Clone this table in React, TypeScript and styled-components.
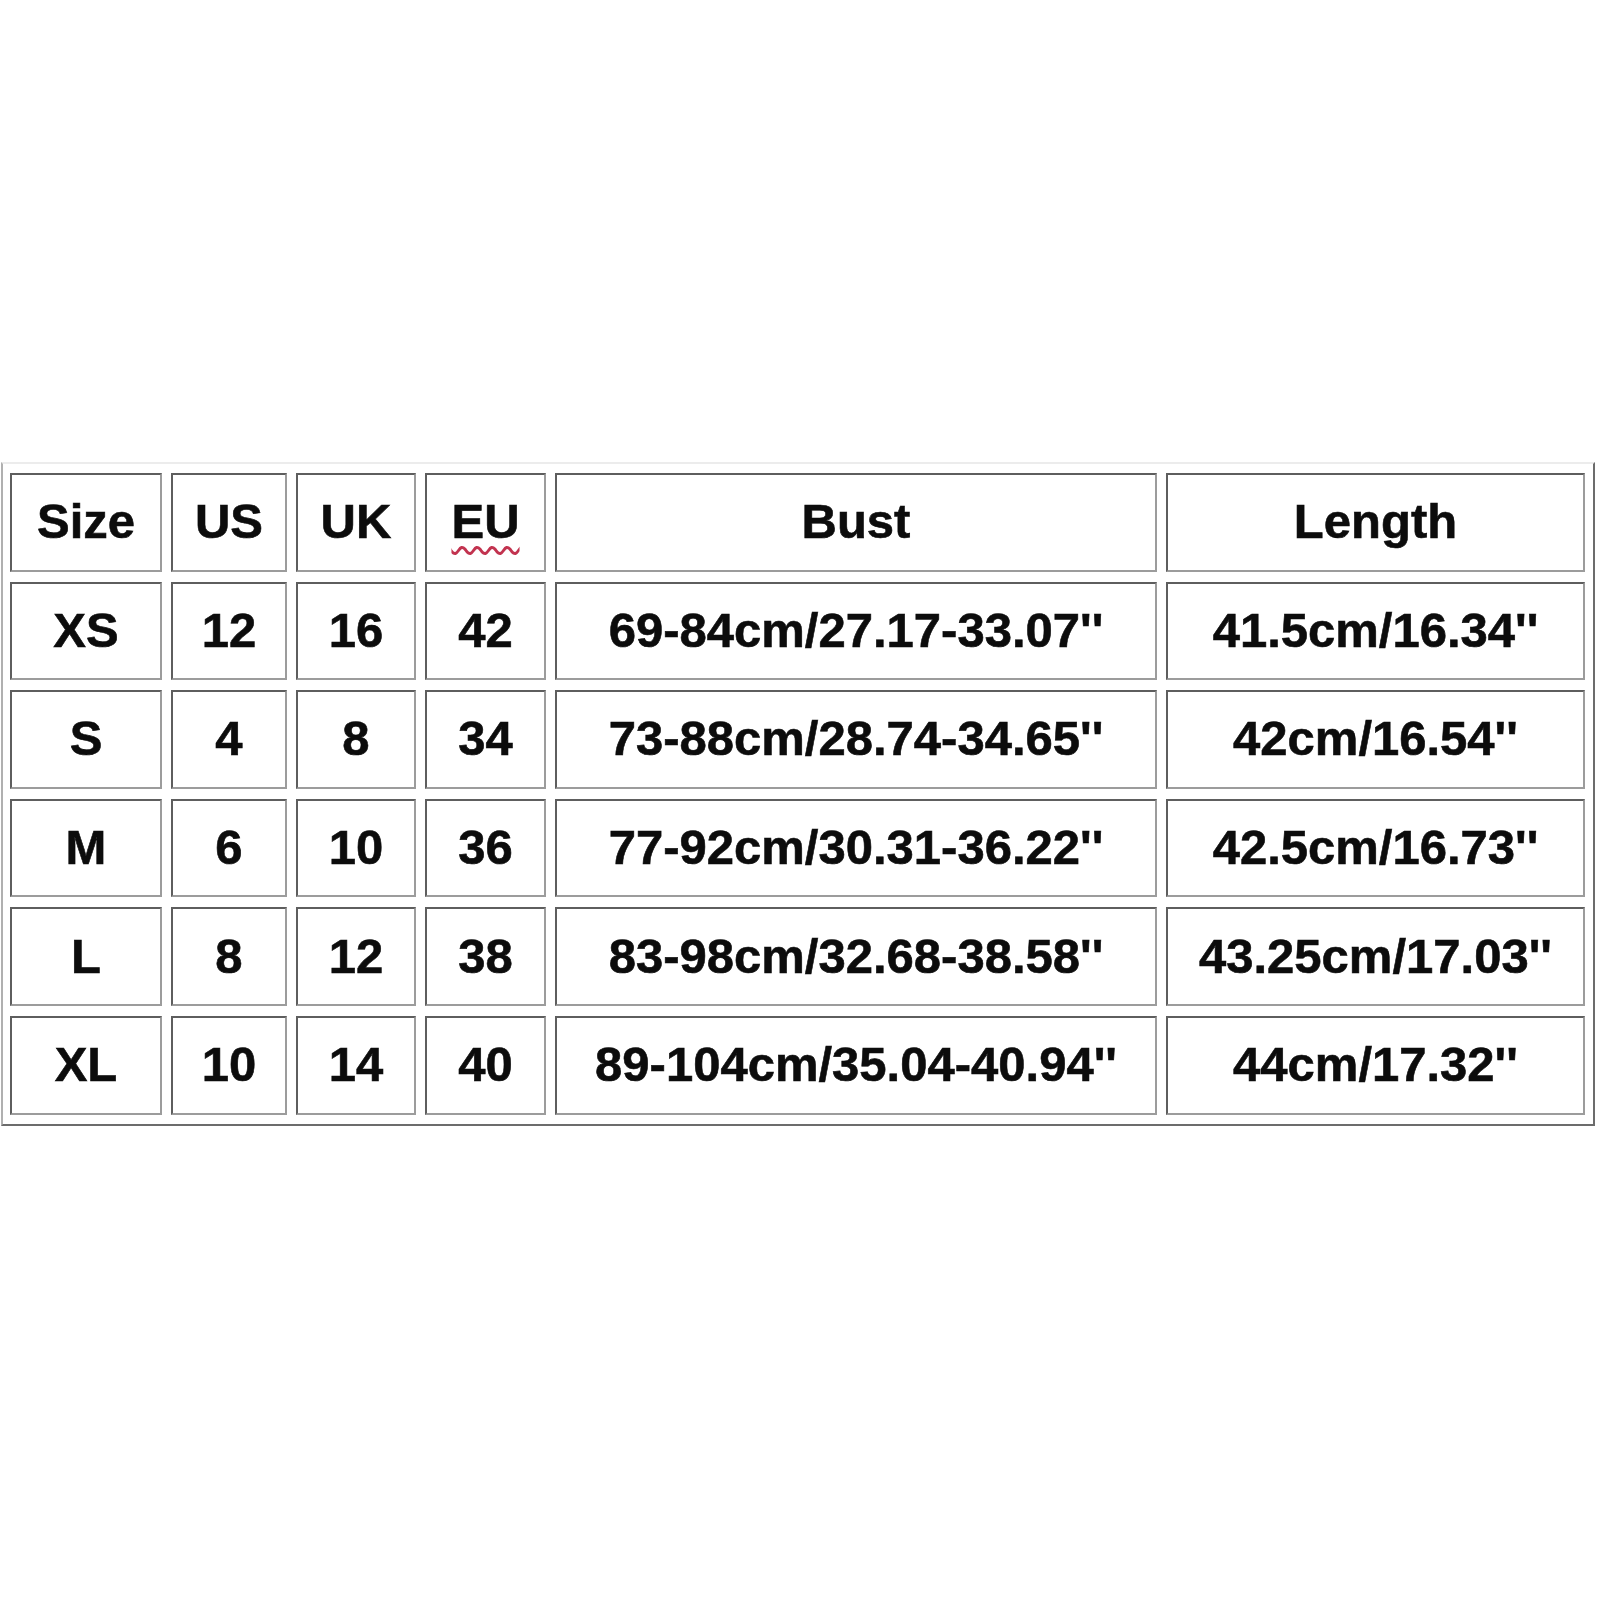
import React from "react";
import styled, { createGlobalStyle } from "styled-components";

const GlobalStyle = createGlobalStyle`
  html, body {
    margin: 0;
    padding: 0;
    background: #ffffff;
  }
`;

const columns = [152, 116, 120, 121, 602, 419];

const header = ["Size", "US", "UK", "EU", "Bust", "Length"];

const rows: string[][] = [
  ["XS", "12", "16", "42", "69-84cm/27.17-33.07''", "41.5cm/16.34''"],
  ["S", "4", "8", "34", "73-88cm/28.74-34.65''", "42cm/16.54''"],
  ["M", "6", "10", "36", "77-92cm/30.31-36.22''", "42.5cm/16.73''"],
  ["L", "8", "12", "38", "83-98cm/32.68-38.58''", "43.25cm/17.03''"],
  ["XL", "10", "14", "40", "89-104cm/35.04-40.94''", "44cm/17.32''"],
];

const App: React.FunctionComponent = () => {
  return (
    <Page>
      <GlobalStyle />
      <Frame>
        <Chart>
          {header.map((label) => (
            <Cell key={`h-${label}`}>
              <Label $misspelled={label === "EU"}>{label}</Label>
            </Cell>
          ))}
          {rows.map((row) =>
            row.map((value, i) => (
              <Cell key={`${row[0]}-${i}`}>
                <Label>{value}</Label>
              </Cell>
            ))
          )}
        </Chart>
      </Frame>
    </Page>
  );
};

export default App;

const Page = styled.div`
  width: 1600px;
  height: 1600px;
  box-sizing: border-box;
  padding: 462px 0 0 1px;
  background: #ffffff;
`;

const Frame = styled.div`
  width: 1594px;
  box-sizing: border-box;
  padding: 9px 8px 9px 7px;
  border: 2px solid #6c6c6c;
  border-top-color: #ececec;
  border-left-color: #b0b0b0;
`;

const Chart = styled.div`
  display: grid;
  grid-template-columns: ${columns.map((w) => `${w}px`).join(" ")};
  grid-auto-rows: 98.6px;
  column-gap: 9px;
  row-gap: 10px;
`;

const Cell = styled.div`
  box-sizing: border-box;
  display: flex;
  align-items: center;
  justify-content: center;
  padding-bottom: 2px;
  background: #ffffff;
  border: 2px solid #9c9c9c;
  border-top-color: #5e5e5e;
  border-left-color: #5e5e5e;
  overflow: visible;
`;

const Label = styled.span<{ $misspelled?: boolean }>`
  display: inline-block;
  font-family: "Liberation Sans", Arial, sans-serif;
  font-weight: 700;
  font-size: 49px;
  color: #0c0c0c;
  white-space: nowrap;
  -webkit-text-stroke: 0.6px #0c0c0c;
  text-decoration: ${(p) => (p.$misspelled ? "underline wavy #c2334f" : "none")};
  text-decoration-thickness: 3px;
  text-underline-offset: 8px;
`;
